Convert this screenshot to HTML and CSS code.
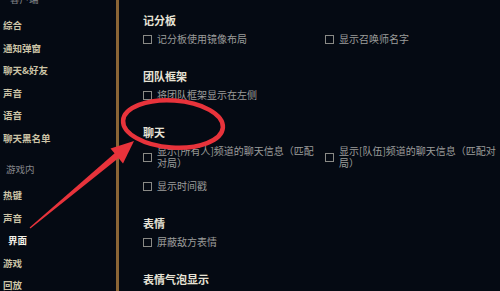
FILE: index.html
```html
<!DOCTYPE html>
<html lang="zh-CN">
<head>
    <meta charset="UTF-8">
    <meta name="viewport" content="width=device-width, initial-scale=1.0">
    <title>设置 - 界面</title>
    <link rel="stylesheet" href="styles.css">
</head>
<body>
    <div class="app">
        <aside class="sidebar">
            <div class="group-label first">客户端</div>
            <ul class="nav">
                <li>综合</li>
                <li>通知弹窗</li>
                <li>聊天&amp;好友</li>
                <li>声音</li>
                <li>语音</li>
                <li>聊天黑名单</li>
            </ul>
            <div class="group-label">游戏内</div>
            <ul class="nav">
                <li>热键</li>
                <li>声音</li>
                <li class="active">界面</li>
                <li>游戏</li>
                <li>回放</li>
            </ul>
        </aside>

        <main class="settings">
            <section class="section">
                <h3>记分板</h3>
                <div class="options">
                    <label class="option"><span class="box"></span><span class="text">记分板使用镜像布局</span></label>
                    <label class="option"><span class="box"></span><span class="text">显示召唤师名字</span></label>
                </div>
            </section>

            <section class="section">
                <h3>团队框架</h3>
                <div class="options">
                    <label class="option"><span class="box"></span><span class="text">将团队框架显示在左侧</span></label>
                </div>
            </section>

            <section class="section">
                <h3>聊天</h3>
                <div class="options">
                    <label class="option"><span class="box"></span><span class="text">显示[所有人]频道的聊天信息（匹配对局）</span></label>
                    <label class="option"><span class="box"></span><span class="text">显示[队伍]频道的聊天信息（匹配对局）</span></label>
                    <label class="option"><span class="box"></span><span class="text">显示时间戳</span></label>
                </div>
            </section>

            <section class="section">
                <h3>表情</h3>
                <div class="options">
                    <label class="option"><span class="box"></span><span class="text">屏蔽敌方表情</span></label>
                </div>
            </section>

            <section class="section">
                <h3>表情气泡显示</h3>
            </section>
        </main>

        <!-- red markup drawn over the screenshot -->
        <svg class="annotation" width="500" height="291" viewBox="0 0 500 291">
            <ellipse cx="173" cy="124" rx="50" ry="23.5" transform="rotate(4 173 124)" fill="none" stroke="#e8333b" stroke-width="4.5"/>
            <polygon points="29.6,227.5 30.4,228.5 119.5,157.2 115.5,152.4" fill="#e8333b"/>
            <polygon points="134,141 110.5,148.5 123,163.5" fill="#e8333b"/>
        </svg>
    </div>
</body>
</html>
```

FILE: styles.css
```css
body {
    margin: 0;
    background: #050a13;
    font-family: "Noto Sans CJK SC", "Noto Sans", sans-serif;
    overflow: hidden;
}

.app {
    position: relative;
    display: flex;
    width: 500px;
    height: 291px;
    overflow: hidden;
}

.sidebar {
    width: 116px;
    flex-shrink: 0;
    border-right: 3px solid #8b6535;
}

.group-label {
    padding-left: 6px;
    margin-top: 12px;
    margin-bottom: 7px;
    line-height: 16px;
    font-size: 9.5px;
    color: #85878c;
}

.group-label.first {
    margin-top: -9px;
    padding-left: 10px;
}

.nav {
    list-style: none;
    margin: 0;
    padding: 0;
}

.nav li {
    padding-left: 3px;
    line-height: 22.5px;
    font-size: 9.5px;
    font-weight: bold;
    color: #cbc3a6;
}

.nav li.active {
    padding-left: 8px;
    color: #f4f1e8;
}

.settings {
    flex: 1;
    padding: 13px 0 0 24px;
}

.section {
    margin-bottom: 24px;
}

.section h3 {
    margin: 0 0 6px;
    line-height: 14px;
    font-size: 11px;
    font-weight: bold;
    color: #e7e3d6;
}

.options {
    display: grid;
    grid-template-columns: 175px 175px;
    column-gap: 7px;
    row-gap: 11px;
}

.option {
    display: flex;
    align-items: center;
    gap: 5px;
}

.box {
    flex-shrink: 0;
    width: 7px;
    height: 7px;
    border: 1px solid #8a8a86;
}

.option .text {
    line-height: 12px;
    font-size: 10px;
    color: #9c9d9b;
}

.annotation {
    position: absolute;
    left: 0;
    top: 0;
    pointer-events: none;
}
```
